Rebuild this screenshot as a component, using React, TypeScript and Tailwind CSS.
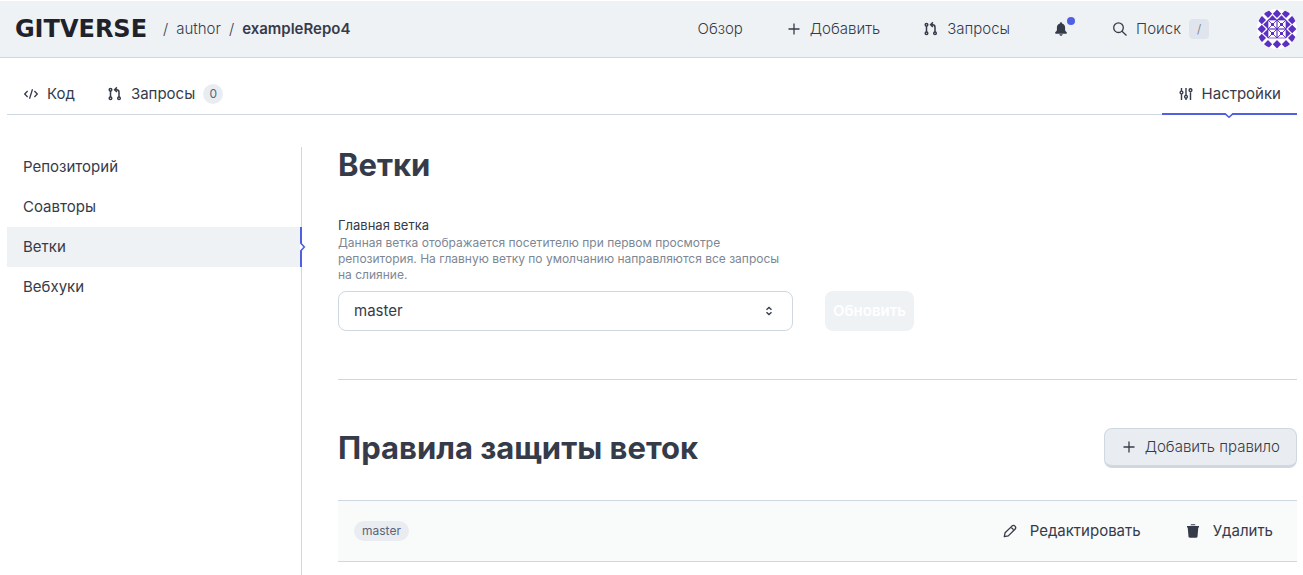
import React from "react";

type IconProps = { className?: string };

const PlusIcon = ({ className = "" }: IconProps) => (
  <svg viewBox="0 0 16 16" className={`size-4 shrink-0 ${className}`} fill="none" stroke="currentColor" strokeWidth="1.3" aria-hidden="true">
    <path d="M8 2.500v11M2.500 8h11" />
  </svg>
);

const PullIcon = ({ className = "" }: IconProps) => (
  <svg viewBox="0 0 16 16" className={`size-4 shrink-0 ${className}`} fill="none" stroke="currentColor" strokeWidth="1.5" aria-hidden="true">
    <circle cx="3.5" cy="3.7" r="1.3" />
    <circle cx="3.5" cy="12.3" r="1.3" />
    <circle cx="12" cy="12.3" r="1.3" />
    <path d="M3.500 5v6M12 11V6.200Q12 3.700 9.600 3.700H7.800M9.900 1.400L7.600 3.700l2.300 2.300" />
  </svg>
);

const CodeIcon = ({ className = "" }: IconProps) => (
  <svg viewBox="0 0 16 16" className={`size-4 shrink-0 ${className}`} fill="none" stroke="currentColor" strokeWidth="1.3" aria-hidden="true">
    <path d="M4.600 5L1.700 8l2.900 3M11.400 5l2.900 3-2.900 3M9.500 3.200l-3 9.600" />
  </svg>
);

const SlidersIcon = ({ className = "" }: IconProps) => (
  <svg viewBox="0 0 16 16" className={`size-4 shrink-0 ${className}`} fill="none" stroke="currentColor" strokeWidth="1.4" aria-hidden="true">
    <path d="M3.500 2v3M3.500 8v6M8 2v7.300M8 12.300V14M12.500 6.200V14" />
    <circle cx="3.5" cy="6.5" r="1.4" />
    <circle cx="8" cy="10.8" r="1.4" />
    <circle cx="12.5" cy="4.2" r="1.4" />
  </svg>
);

const SearchIcon = () => (
  <svg viewBox="0 0 16 16" className="size-4 shrink-0" fill="none" stroke="currentColor" strokeWidth="1.3" aria-hidden="true">
    <circle cx="6.5" cy="6.7" r="4.8" />
    <path d="M10 10.200l4.500 4.300" />
  </svg>
);

const BellIcon = () => (
  <svg viewBox="0 0 16 16" className="size-4 shrink-0" fill="currentColor" aria-hidden="true">
    <path d="M8 1.200c.6 0 1 .4 1 1v.4c1.900.4 3.100 2 3.100 4v2.200c0 1 .6 1.600 1.400 2.300.3.3.4.6.4.9 0 .4-.3.7-.8.7H2.900c-.5 0-.8-.3-.8-.7 0-.3.1-.6.4-.9.8-.7 1.400-1.300 1.400-2.300V6.600c0-2 1.200-3.600 3.100-4v-.4c0-.6.400-1 1-1z" />
    <path d="M6.200 13.300h3.600C9.600 14.200 8.900 14.800 8 14.800s-1.600-.6-1.800-1.500z" />
  </svg>
);

const PencilIcon = () => (
  <svg viewBox="0 0 16 16" className="size-4 shrink-0" fill="none" stroke="currentColor" strokeWidth="1.3" strokeLinejoin="round" aria-hidden="true">
    <path d="M2.300 13.700l.8-4 6.800-6.600c1-.9 2.200-.9 3.100 0s.9 2.100 0 3.100l-6.700 6.700-4 .8z" />
    <path d="M8.800 4.800c1.300-.1 2.400.9 2.400 2.400" />
  </svg>
);

const TrashIcon = () => (
  <svg viewBox="0 0 16 16" className="size-4 shrink-0" fill="currentColor" aria-hidden="true">
    <path d="M5.500 2.300c0-.7.500-1.100 1.300-1.100h2.400c.8 0 1.300.4 1.300 1.100h-1.400H6.900zM2 3h12v1.500H2zM2.700 4.500h10.600l-.8 9c-.1.800-.6 1.200-1.300 1.200H4.800c-.7 0-1.200-.4-1.300-1.200z" />
  </svg>
);

const Avatar = () => (
  <svg viewBox="0 0 40 40" className="size-10" role="img" aria-label="author">
    <defs>
      <clipPath id="avatar-clip">
        <circle cx="20" cy="20" r="20" />
      </clipPath>
      <path id="avatar-diamonds" d="M11 .6l4.200 4.200L11 9 6.800 4.800zM20 .6l4.200 4.200L20 9l-4.200-4.200zM29 .6l4.200 4.200L29 9l-4.200-4.200z" />
      <path id="avatar-triangles" d="M11 11l4.500-4.800L20 11zM20 11l4.500-4.800L29 11z" />
      <g id="avatar-star">
        <path d="M0 0h9v9H0z" fill="none" stroke="#5b2fc0" strokeWidth=".7" />
        <path d="M0 0l9 9M9 0L0 9" stroke="#5b2fc0" strokeWidth=".9" />
        <path d="M3 3h3v3H3z" fill="#5b2fc0" />
      </g>
    </defs>
    <g clipPath="url(#avatar-clip)">
      <rect width="40" height="40" fill="#fff" />
      <g fill="#5b2fc0">
        <use href="#avatar-diamonds" />
        <use href="#avatar-diamonds" transform="rotate(90 20 20)" />
        <use href="#avatar-diamonds" transform="rotate(180 20 20)" />
        <use href="#avatar-diamonds" transform="rotate(270 20 20)" />
        <use href="#avatar-triangles" />
        <use href="#avatar-triangles" transform="rotate(90 20 20)" />
        <use href="#avatar-triangles" transform="rotate(270 20 20)" />
      </g>
      <use href="#avatar-star" x="11" y="11" />
      <use href="#avatar-star" x="20" y="11" />
      <use href="#avatar-star" x="11" y="20" />
      <use href="#avatar-star" x="20" y="20" />
    </g>
  </svg>
);

const menu = ["Репозиторий", "Соавторы", "Ветки", "Вебхуки"];

const Header = () => (
  <header className="border-t border-b border-t-white border-b-[#cfd8e0] bg-[#eff2f5]">
    <div className="flex h-14 items-center justify-between pr-1.5 pl-[7px]">
      <div className="flex items-center gap-2">
        <a href="#" className="w-[148px] text-center font-['DejaVu_Sans'] text-2xl leading-6 font-bold text-[#1f222b]">
          GITVERSE
        </a>
        <span className="font-light">/</span>
        <a href="#" className="font-light">author</a>
        <span className="font-light">/</span>
        <a href="#" className="font-semibold">exampleRepo4</a>
      </div>
      <div className="flex items-center gap-12">
        <nav className="flex items-center gap-[43px] font-light">
          <a href="#">Обзор</a>
          <button type="button" className="flex items-center gap-2">
            <PlusIcon />
            Добавить
          </button>
          <a href="#" className="flex items-center gap-2">
            <PullIcon />
            Запросы
          </a>
          <button type="button" aria-label="Уведомления" className="relative">
            <BellIcon />
            <span className="absolute -top-1 -right-1.5 size-2 rounded-full bg-[#505fe3]" />
          </button>
          <button type="button" className="flex items-center gap-2">
            <SearchIcon />
            Поиск
            <kbd className="flex size-5 items-center justify-center rounded bg-[#e0e4ec] font-[Inter] text-xs text-[#6b7280]">/</kbd>
          </button>
        </nav>
        <a href="#">
          <Avatar />
        </a>
      </div>
    </div>
  </header>
);

const Tabs = () => (
  <nav className="flex h-[57px] items-end justify-between border-b border-[#cfd8e0]">
    <div className="flex">
      <a href="#" className="flex h-10 items-center gap-2 px-4">
        <CodeIcon />
        Код
      </a>
      <a href="#" className="flex h-10 items-center gap-2 px-4">
        <PullIcon />
        Запросы
        <span className="flex size-5 items-center justify-center rounded-full bg-[#e9edf1] text-xs text-[#5b6478]">0</span>
      </a>
    </div>
    <a href="#" className="relative -mb-px flex h-[41px] items-center gap-2 border-b-2 border-[#505fe3] px-4">
      <SlidersIcon />
      Настройки
      <svg viewBox="0 0 10 6" className="absolute top-full left-1/2 h-1.5 w-2.5 -translate-x-1/2" fill="none" aria-hidden="true">
        <path d="M1 0h8L5 4z" fill="#fff" />
        <path d="M0 .9h1.200L5 4.300 8.800.9H10" stroke="#505fe3" strokeWidth="1.6" />
      </svg>
    </a>
  </nav>
);

const Sidebar = () => (
  <aside className="w-[295px] shrink-0 border-r border-[#cfd8e0]">
    <ul>
      {menu.map((item) =>
        item === "Ветки" ? (
          <li key={item} className="relative -mr-px border-r-2 border-[#505fe3] bg-[#eff2f5]">
            <a href="#" aria-current="page" className="flex h-10 items-center px-4">{item}</a>
            <svg viewBox="0 0 6 10" className="absolute top-1/2 left-full h-2.5 w-1.5 -translate-y-1/2" fill="none" aria-hidden="true">
              <path d="M0 1v8l4-4z" fill="#fff" />
              <path d="M.9 0v1.200L4.300 5 .9 8.800V10" stroke="#505fe3" strokeWidth="1.6" />
            </svg>
          </li>
        ) : (
          <li key={item}>
            <a href="#" className="flex h-10 items-center px-4">{item}</a>
          </li>
        )
      )}
    </ul>
  </aside>
);

const App: React.FC = () => {
  return (
    <div className="flex min-h-screen flex-col bg-white font-[Inter,sans-serif] text-[15px] leading-5 text-[#363b4a]">
      <Header />

      <div className="flex grow flex-col pr-1.5 pl-[7px]">
        <Tabs />

        <div className="mt-8 flex grow gap-9">
          <Sidebar />

          <main className="min-w-0 grow">
            {/* Default branch */}
            <section className="border-b border-[#cfd8e0] pb-12">
              <h1 className="text-[31px] leading-9 font-bold">Ветки</h1>
              <div className="mt-8 max-w-[455px]">
                <label htmlFor="branch" className="text-[13px] leading-[18px]">Главная ветка</label>
                <p className="text-xs text-[#7d8794]">
                  Данная ветка отображается посетителю при первом просмотре репозитория. На главную ветку по умолчанию
                  направляются все запросы на слияние.
                </p>
              </div>
              <div className="mt-2 flex gap-8">
                <div className="relative w-full max-w-[455px]">
                  <select id="branch" className="h-10 w-full appearance-none rounded-lg border border-[#cfd8e0] bg-white px-[15px]">
                    <option>master</option>
                  </select>
                  <svg viewBox="0 0 8 10" className="pointer-events-none absolute top-[15px] right-5 h-2.5 w-2" fill="none" stroke="currentColor" strokeWidth="1.4" aria-hidden="true">
                    <path d="M1.500 3.700L4 1.500l2.500 2.200M1.500 6.300L4 8.500l2.500-2.200" />
                  </svg>
                </div>
                <button type="button" disabled className="h-10 rounded-lg bg-[#eff2f5] px-2 font-semibold text-white">
                  Обновить
                </button>
              </div>
            </section>

            {/* Protection rules */}
            <section className="pt-12">
              <div className="flex items-center justify-between">
                <h2 className="text-[31px] leading-9 font-bold">Правила защиты веток</h2>
                <button type="button" className="flex h-10 items-center gap-2 rounded-lg border border-b-3 border-[#cfd8e0] bg-[#e9edf1] px-4 font-light">
                  <PlusIcon />
                  Добавить правило
                </button>
              </div>
              <div className="mt-8 flex items-center justify-between border-y border-[#cfd8e0] bg-[#f9fafa] px-4 py-2.5">
                <span className="rounded-full bg-[#e9ecf1] px-2 text-xs leading-5 text-[#5b6478]">master</span>
                <div className="flex gap-7">
                  <button type="button" className="flex h-10 items-center gap-3 px-2">
                    <PencilIcon />
                    Редактировать
                  </button>
                  <button type="button" className="flex h-10 items-center gap-3 px-2">
                    <TrashIcon />
                    Удалить
                  </button>
                </div>
              </div>
            </section>
          </main>
        </div>
      </div>
    </div>
  );
};

export default App;
